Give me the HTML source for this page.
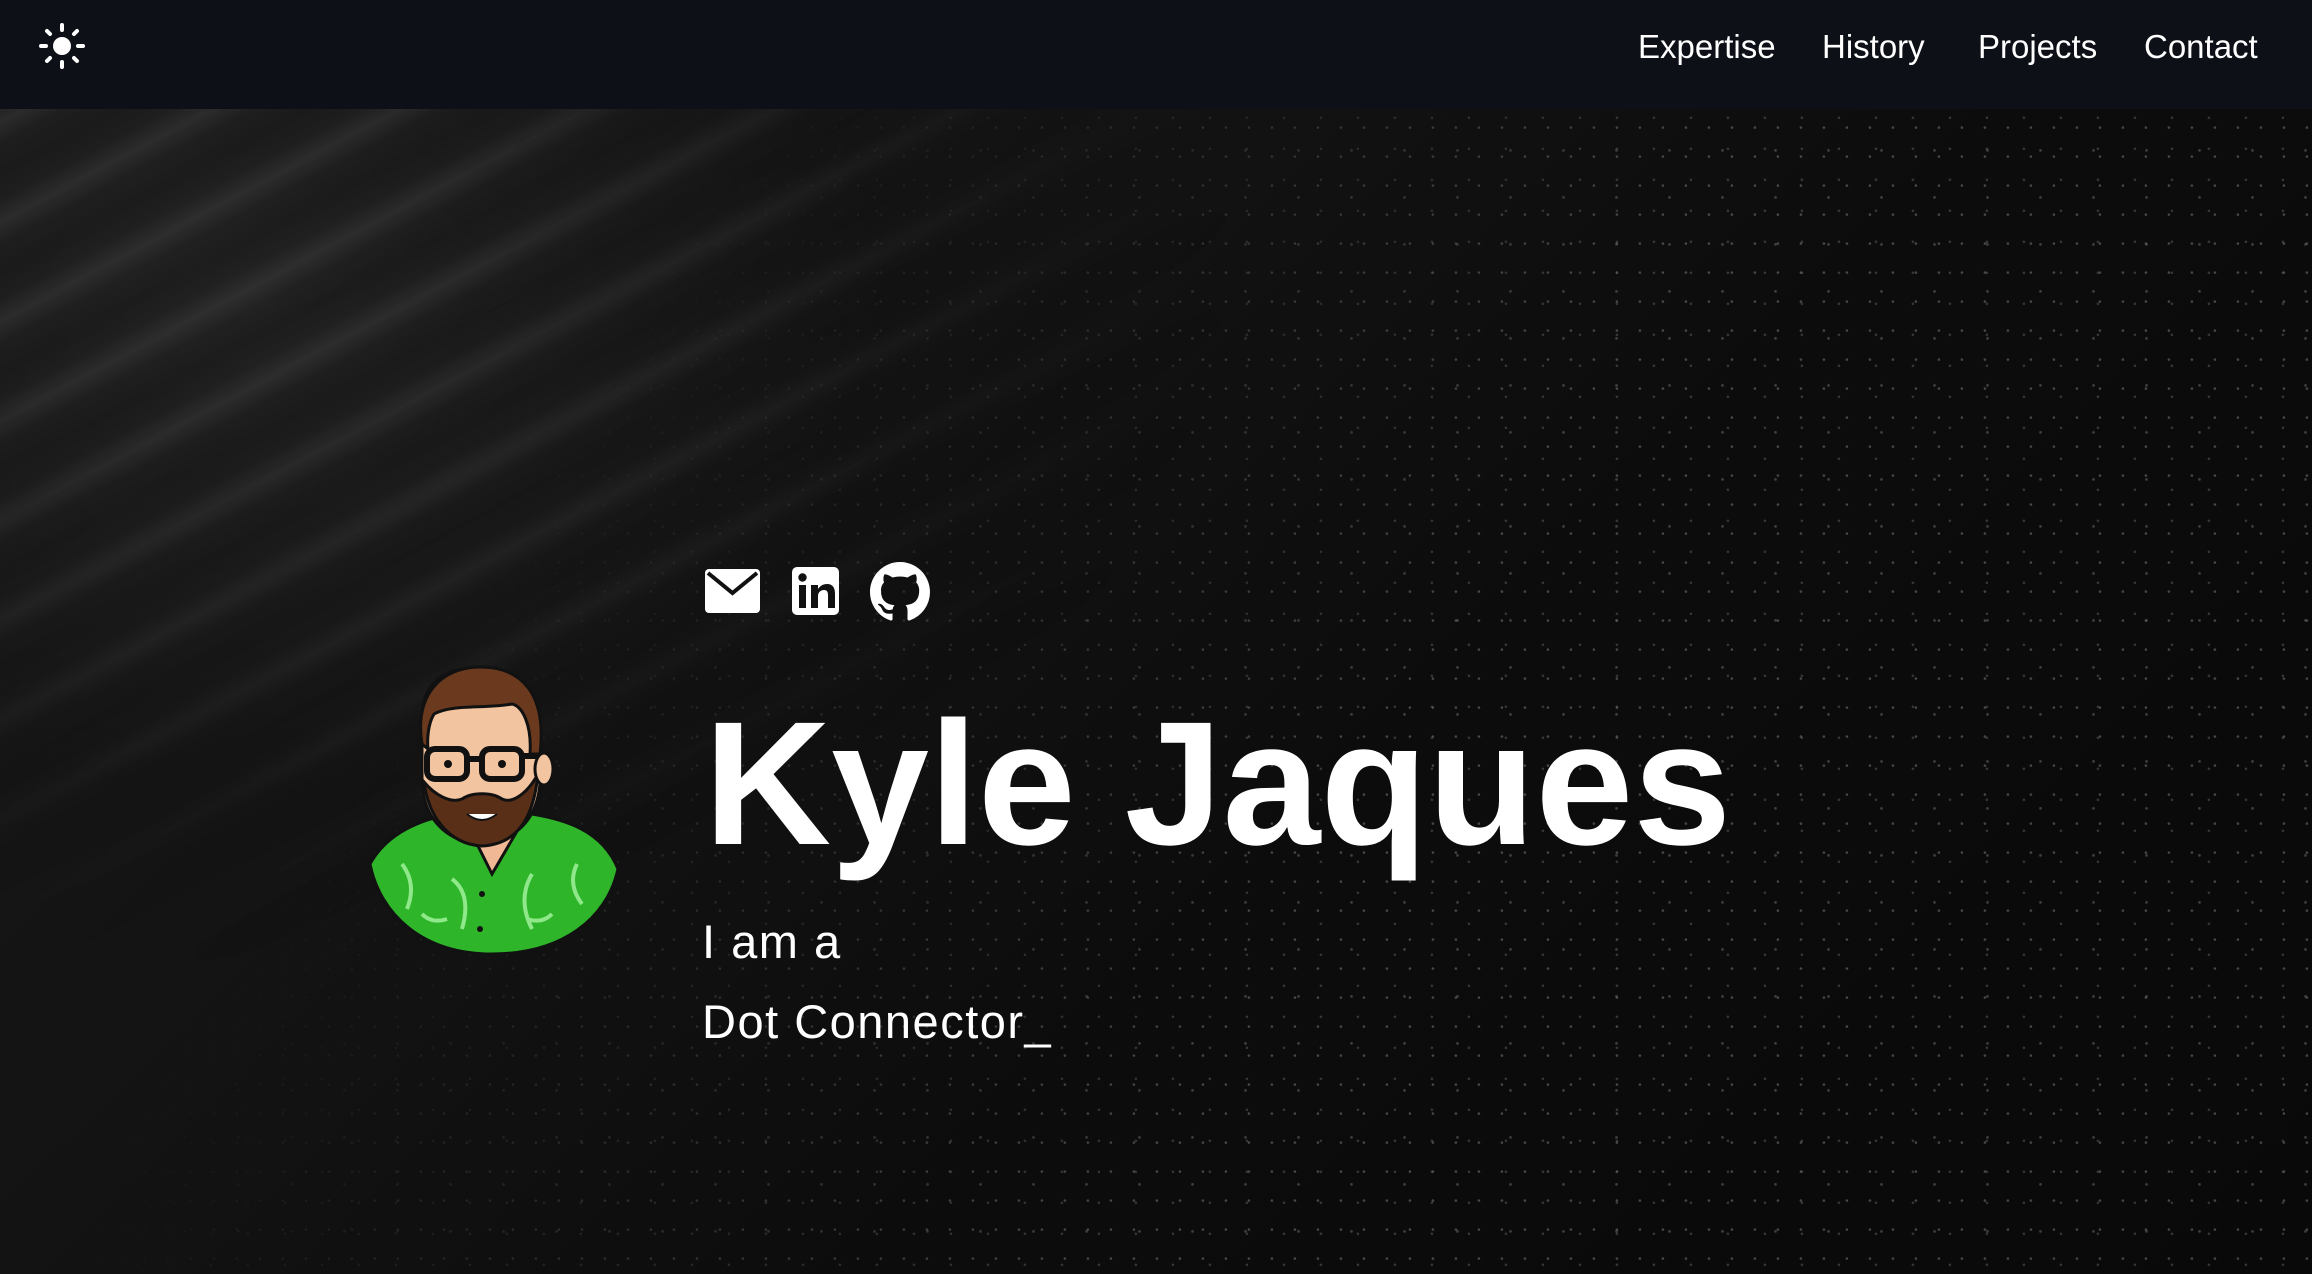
<!DOCTYPE html>
<html><head><meta charset="utf-8"><style>
html,body{margin:0;padding:0;width:2312px;height:1274px;overflow:hidden;background:#0b0b0b;font-family:"Gill Sans","Liberation Sans",sans-serif;}
.bg{position:absolute;left:0;top:0;width:2312px;height:1274px;
background:
radial-gradient(ellipse 900px 700px at 250px 300px, rgba(60,60,60,.3), rgba(0,0,0,0) 70%),
linear-gradient(135deg,#1a1a1a 0%,#131313 35%,#0c0c0c 60%,#090909 100%);}
.rip{position:absolute;left:0;top:0;width:2312px;height:1274px;
background:repeating-linear-gradient(152deg, rgba(255,255,255,0) 0px, rgba(255,255,255,.06) 20px, rgba(255,255,255,0) 40px, rgba(0,0,0,.12) 65px, rgba(255,255,255,0) 88px);
-webkit-mask-image:radial-gradient(ellipse 1300px 900px at 200px 250px,#000 20%,transparent 80%);}
.noise{position:absolute;left:0;top:0;width:2312px;height:1274px;opacity:.35;
background-image:radial-gradient(circle at 30% 40%,rgba(255,255,255,.7) 1px,transparent 1.6px),radial-gradient(circle at 70% 80%,rgba(255,255,255,.5) 1px,transparent 1.6px),radial-gradient(circle at 50% 20%,rgba(255,255,255,.6) 1px,transparent 1.8px);
background-size:23px 29px,37px 31px,53px 47px;
-webkit-mask-image:linear-gradient(120deg,transparent 25%,#000 60%);}
.nav{position:absolute;left:0;top:0;width:2312px;height:109px;background:#0d1117;}
.nav a{position:absolute;top:28px;color:#fff;font-size:33px;text-decoration:none;}
.name{position:absolute;left:704px;top:696px;color:#fff;font-weight:bold;font-size:176px;line-height:1;letter-spacing:0px;white-space:nowrap;}
.sub{position:absolute;left:702px;color:#fff;font-size:47px;line-height:1;letter-spacing:1.5px;}
</style></head><body>
<div class="bg"></div><div class="rip"></div><div class="noise"></div>
<div class="nav">
<svg style="position:absolute;left:38px;top:22px" width="48" height="48" viewBox="0 0 48 48"><circle cx="24" cy="24" r="9" fill="#fff"/><g stroke="#fff" stroke-width="4" stroke-linecap="round"><line x1="24" y1="3" x2="24" y2="8"/><line x1="24" y1="40" x2="24" y2="45"/><line x1="3" y1="24" x2="8" y2="24"/><line x1="40" y1="24" x2="45" y2="24"/><line x1="9" y1="9" x2="12" y2="12"/><line x1="36" y1="36" x2="39" y2="39"/><line x1="9" y1="39" x2="12" y2="36"/><line x1="36" y1="12" x2="39" y2="9"/></g></svg>
<a style="left:1638px">Expertise</a><a style="left:1822px">History</a><a style="left:1978px">Projects</a><a style="left:2144px">Contact</a>
</div>
<svg style="position:absolute;left:705px;top:569px" width="55" height="44" viewBox="0 0 55 44"><rect x="0" y="0" width="55" height="44" rx="4" fill="#fff"/><path d="M3 4 L27.5 24 L52 4" fill="none" stroke="#111" stroke-width="4"/></svg>
<svg style="position:absolute;left:792px;top:567px" width="47" height="48" viewBox="0 0 47 48"><rect width="47" height="48" rx="5" fill="#fff"/><rect x="7" y="18" width="7" height="23" fill="#111"/><circle cx="10.5" cy="10.5" r="4.2" fill="#111"/><path d="M19 18h7v4c2-3 5-5 9-5 6 0 8 4 8 10v14h-7V28c0-3-1-5-4-5s-6 2-6 6v12h-7z" fill="#111"/></svg>
<svg style="position:absolute;left:870px;top:562px" width="60" height="60" viewBox="0 0 16 16"><path fill="#fff" d="M8 0C3.58 0 0 3.58 0 8c0 3.54 2.29 6.53 5.47 7.59.4.07.55-.17.55-.38 0-.19-.01-.82-.01-1.49-2.01.37-2.53-.49-2.69-.94-.09-.23-.48-.94-.82-1.13-.28-.15-.68-.52-.01-.53.63-.01 1.08.58 1.23.82.72 1.21 1.87.87 2.33.66.07-.52.28-.87.51-1.07-1.78-.2-3.64-.89-3.64-3.95 0-.87.31-1.59.82-2.15-.08-.2-.36-1.02.08-2.12 0 0 .67-.21 2.2.82.64-.18 1.32-.27 2-.27.68 0 1.36.09 2 .27 1.53-1.04 2.2-.82 2.2-.82.44 1.1.16 1.92.08 2.12.51.56.82 1.27.82 2.15 0 3.07-1.87 3.75-3.65 3.95.29.25.54.73.54 1.48 0 1.07-.01 1.93-.01 2.2 0 .21.15.46.55.38A8.013 8.013 0 0016 8c0-4.42-3.58-8-8-8z"/></svg>
<svg style="position:absolute;left:362px;top:664px" width="262" height="290" viewBox="0 0 262 290">
<path d="M8 200 C30 160 80 150 100 150 L170 150 C200 155 240 165 256 205 C245 255 200 290 130 290 C60 290 18 250 8 200Z" fill="#2eb52a" stroke="#111" stroke-width="3"/>
<g fill="none" stroke="#8fe88a" stroke-width="4"><path d="M40 200 q15 20 5 45"/><path d="M90 215 q20 15 10 50"/><path d="M170 210 q-15 25 0 55"/><path d="M215 200 q-10 20 5 40"/><path d="M60 250 q10 10 25 5"/><path d="M190 250 q-10 10-25 5"/></g>
<path d="M100 150 L130 210 L165 150Z" fill="#f0b894" stroke="#111" stroke-width="3"/>
<circle cx="120" cy="230" r="3" fill="#111"/><circle cx="118" cy="265" r="3" fill="#111"/>
<path d="M60 60 C58 20 80 4 115 4 C155 4 180 25 178 70 L178 120 C175 150 160 175 120 180 C80 178 62 150 60 120Z" fill="#f2c4a0" stroke="#111" stroke-width="3"/>
<path d="M60 80 C52 30 80 3 118 3 C160 3 185 30 178 90 L168 90 C170 60 160 42 150 40 C120 45 90 40 72 50 C66 60 65 75 66 85Z" fill="#6b3a1e" stroke="#111" stroke-width="3"/>
<path d="M62 118 C66 150 85 180 120 182 C158 180 172 150 176 110 C165 130 150 140 140 135 C130 128 110 128 100 135 C88 140 72 130 62 118Z" fill="#5a2f17" stroke="#111" stroke-width="3"/>
<path d="M105 150 q15 12 30 0" fill="#fff" stroke="#111" stroke-width="2"/>
<g fill="none" stroke="#111" stroke-width="6"><rect x="65" y="85" width="40" height="30" rx="8"/><rect x="120" y="85" width="40" height="30" rx="8"/><path d="M105 95 h15 M160 92 h18"/></g>
<circle cx="86" cy="100" r="4" fill="#111"/><circle cx="140" cy="100" r="4" fill="#111"/>
<ellipse cx="182" cy="105" rx="9" ry="16" fill="#f2c4a0" stroke="#111" stroke-width="3"/>
</svg>
<div class="name">Kyle Jaques</div>
<div class="sub" style="top:918px">I am a</div>
<div class="sub" style="top:998px">Dot Connector_</div>
</body></html>
